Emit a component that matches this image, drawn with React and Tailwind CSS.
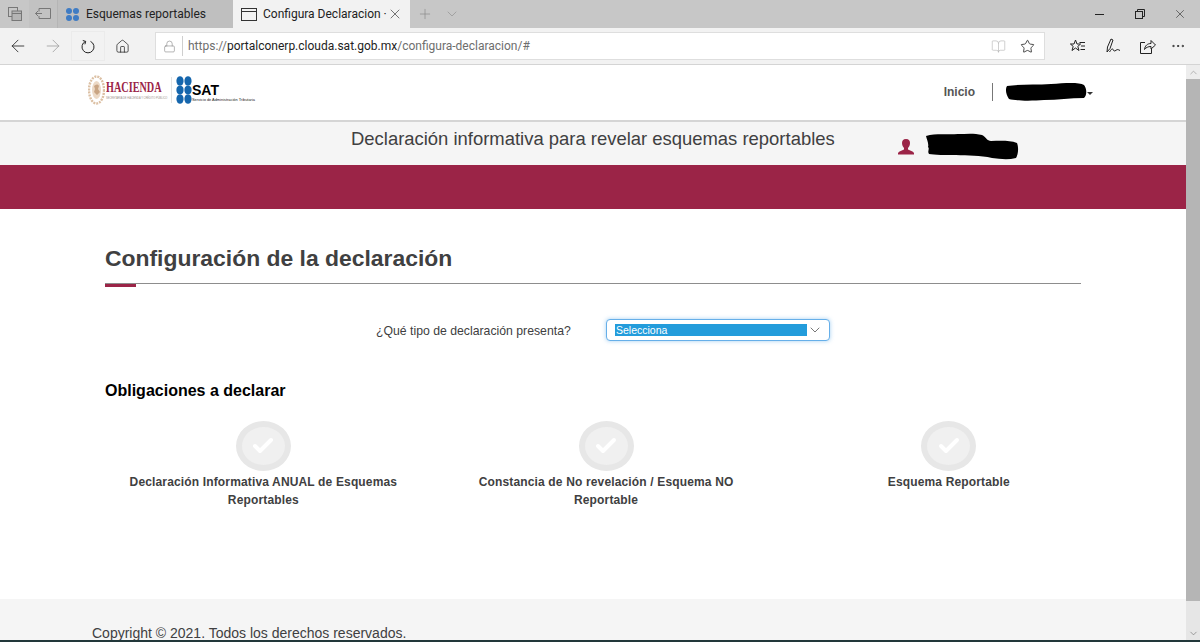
import React from "react";
import { ArrowLeft, ArrowRight, Home, Lock, Star, Plus, ChevronDown, ChevronUp, X, MoreHorizontal, BookOpen, Check } from "lucide-react";

function Emblem() {
  return (
    <svg width="17" height="30" viewBox="0 0 17 30" className="block shrink-0">
      <ellipse cx="8.5" cy="15" rx="7.5" ry="13.5" fill="none" stroke="#dcc0a4" strokeWidth="2.4" strokeDasharray="2 1" />
      <ellipse cx="8.5" cy="15" rx="4.5" ry="9" fill="#ecd9c6" />
      <path d="M6 11c2-2 4-2 5 0l-1 3 2 3-3 3-3-3 1-3z" fill="#c9a584" />
    </svg>
  );
}

function SatDots() {
  return (
    <svg width="16" height="28" viewBox="0 0 16 28" className="block shrink-0">
      <g fill="#1566ad">
        <ellipse cx="4" cy="5" rx="3.6" ry="4.8" />
        <ellipse cx="12" cy="5" rx="3.6" ry="4.8" />
        <ellipse cx="4" cy="14" rx="3.6" ry="4.2" />
        <ellipse cx="12" cy="14" rx="3.6" ry="4.2" />
        <ellipse cx="4" cy="23" rx="3.6" ry="4.8" />
        <ellipse cx="12" cy="23" rx="3.6" ry="4.8" />
      </g>
    </svg>
  );
}

function RestoreIcon() {
  return (
    <svg width="10" height="10" viewBox="0 0 10 10" fill="none" stroke="#222" strokeWidth="1">
      <rect x="0.5" y="2.500" width="7" height="7" />
      <path d="M2.500 2.500V.5h7v7H7.500" />
    </svg>
  );
}

function TabsIcon() {
  return (
    <svg width="14" height="14" viewBox="0 0 14 14" fill="none" stroke="#777" strokeWidth="1">
      <rect x="0.5" y="0.5" width="9" height="9" />
      <rect x="4" y="4" width="9.500" height="9.500" fill="#b5b5b5" />
      <path d="M4 6.500h9.500" />
    </svg>
  );
}

function AsideIcon() {
  return (
    <svg width="16" height="12" viewBox="0 0 16 12" fill="none" stroke="#777" strokeWidth="1">
      <path d="M4 3.500V.5h11.500v10H4V8" />
      <path d="M7 5.500H.5M3 3 .5 5.500 3 8" />
    </svg>
  );
}

function PageIcon() {
  return (
    <svg width="16" height="13" viewBox="0 0 16 13" fill="none" stroke="#333" strokeWidth="1" className="shrink-0">
      <rect x="0.5" y="0.5" width="15" height="12" />
      <path d="M0.500 3.500h15" />
    </svg>
  );
}

function FourDots() {
  return (
    <svg width="13" height="13" viewBox="0 0 13 13" fill="#3f7cc4" className="shrink-0">
      <circle cx="3" cy="3" r="3" />
      <circle cx="10" cy="3" r="3" />
      <circle cx="3" cy="10" r="3" />
      <circle cx="10" cy="10" r="3" />
    </svg>
  );
}

function ReloadIcon() {
  return (
    <svg width="14" height="15" viewBox="0 0 14 15" fill="none" stroke="#222" strokeWidth="1">
      <path d="M4.500 2.400A6 6 0 1 0 9.500 2.400" />
      <path d="M1.800 1.500 4.700 2.400 3.900 5.300" />
    </svg>
  );
}

function FavList() {
  return (
    <svg width="15" height="14" viewBox="0 0 15 14" fill="none" stroke="#222" strokeWidth="1">
      <path d="M5.500 1 7 5h3.600L7.800 7.400 9 11.500 5.500 9 2 11.500l1.200-4.100L.4 5H4z" />
      <path d="M9.500 3.500H15M11 7h4M10.500 10.500H15" />
    </svg>
  );
}

function PenIcon() {
  return (
    <svg width="15" height="16" viewBox="0 0 15 16" fill="none" stroke="#222" strokeWidth="1">
      <path d="M1 14 1.500 9 5 1l2 1-3 8.500z" />
      <path d="M3.500 14c2-3 3-4 3.500-2.500s1.500 2 3 .8 2-.8 4 .2" />
    </svg>
  );
}

function ShareIcon() {
  return (
    <svg width="16" height="15" viewBox="0 0 16 15" fill="none" stroke="#222" strokeWidth="1">
      <path d="M5 3.500H.5v11h11V10" />
      <path d="M4.500 10.500c.5-4 3-6 6.500-6V1.500l4.500 4.500L11 10V7.500c-3 0-5 1-6.500 3z" />
    </svg>
  );
}

function Scribble({ d, width, height }) {
  return (
    <svg width={width} height={height} viewBox={`0 0 ${width} ${height}`} className="block shrink-0">
      <path d={d} fill="#000" />
    </svg>
  );
}

function ToolButton({ children, className }) {
  return <div className={`flex h-[30px] items-center justify-center ${className}`}>{children}</div>;
}

function Obligation({ lines }) {
  return (
    <div className="flex flex-col items-center">
      <div className="flex h-[50px] w-[55px] items-center justify-center rounded-[50%] border-[6px] border-[#e7e7e7] bg-[#f0f0f0]">
        <Check size={24} strokeWidth={4} color="#ffffff" />
      </div>
      <p className="mt-[2px] w-[290px] text-center text-[12px] font-bold leading-[18px] tracking-[0.15px] text-[#404041]">{lines}</p>
    </div>
  );
}

export default function App() {
  return (
    <div className="flex h-[642px] w-[1200px] flex-col overflow-hidden bg-white font-['Liberation_Sans',Arial,sans-serif]">
      {/* Tab strip */}
      <div className="flex h-[28px] shrink-0 items-stretch bg-[#c7c7c7] font-['Roboto','Noto_Sans',sans-serif] text-[12px] text-[#222222]">
        <div className="flex w-[29px] items-center justify-center"><TabsIcon /></div>
        <div className="flex w-[28px] items-center justify-center bg-[#c2c2c2]"><AsideIcon /></div>
        <div className="flex w-[176px] items-center gap-[7px] border-l border-[#b5b5b5] bg-[#bfbfbf] pl-[8px]">
          <FourDots />
          <span>Esquemas reportables</span>
        </div>
        <div className="flex w-[177px] items-center bg-[#f2f2f2] pl-[8px] pr-[7px]">
          <PageIcon />
          <span className="ml-[6px] whitespace-nowrap">Configura Declaracion ·</span>
          <X size={16} strokeWidth={1} color="#333" className="ml-auto" />
        </div>
        <div className="flex items-center gap-[11px] pl-[7px]">
          <Plus size={16} strokeWidth={1} color="#8a8a8a" />
          <ChevronDown size={16} strokeWidth={1} color="#8f8f8f" />
        </div>
        <div className="ml-auto flex items-center">
          <div className="flex w-[41px] justify-center"><div className="h-px w-[9px] bg-[#222]" /></div>
          <div className="flex w-[40px] justify-center"><RestoreIcon /></div>
          <div className="flex w-[40px] justify-center"><X size={14} strokeWidth={1} color="#222" /></div>
        </div>
      </div>

      {/* Toolbar */}
      <div className="flex h-[37px] shrink-0 items-center border-b border-[#d4d4d4] bg-[#f2f2f2] pr-[8px]">
        <ToolButton className="w-[35px]"><ArrowLeft size={20} strokeWidth={1} color="#222" /></ToolButton>
        <ToolButton className="w-[36px]"><ArrowRight size={20} strokeWidth={1} color="#a0a0a0" /></ToolButton>
        <ToolButton className="w-[34px] border border-[#ebebeb]"><ReloadIcon /></ToolButton>
        <ToolButton className="w-[35px]"><Home size={15} strokeWidth={1.2} color="#222" /></ToolButton>
        <div className="ml-[15px] flex h-[28px] w-[890px] items-center border border-[#dedede] bg-white font-['Roboto','Noto_Sans',sans-serif] text-[12px]">
          <Lock size={13} strokeWidth={1} color="#777" className="ml-[7px]" />
          <div className="ml-[6px] h-[20px] w-px bg-[#cfcfcf]" />
          <span className="ml-[5px] text-[#6e6e6e]">https://</span>
          <span className="text-[#222]">portalconerp.clouda.sat.gob.mx</span>
          <span className="text-[#6e6e6e]">/configura-declaracion/#</span>
          <BookOpen size={15} strokeWidth={1} color="#b4b4b4" className="ml-auto" />
          <Star size={15} strokeWidth={1.3} color="#222" className="ml-[14px] mr-[9px]" />
        </div>
        <div className="ml-[25px]"><FavList /></div>
        <div className="ml-[21px]"><PenIcon /></div>
        <div className="ml-[19px]"><ShareIcon /></div>
        <MoreHorizontal size={16} strokeWidth={1.3} color="#222" className="ml-[14px]" />
      </div>

      <div className="flex min-h-0 flex-1">
        {/* Page */}
        <div className="flex min-w-0 flex-1 flex-col">
          {/* Header */}
          <div className="flex h-[57px] shrink-0 items-center border-b-2 border-[#d5d5d5] bg-white pb-[2px] pl-[88px] pr-[93px]">
            <div className="mb-[4px] flex items-center">
              <Emblem />
              <div className="ml-[1px] flex w-[62px] flex-col">
                <span className="origin-left scale-x-[0.68] whitespace-nowrap font-['Liberation_Serif',serif] text-[15px] font-bold leading-[15px] text-[#9b2447]">HACIENDA</span>
                <span className="mt-[2px] whitespace-nowrap text-[2.6px] leading-[3px] text-[#9a8f8a]">SECRETARÍA DE HACIENDA Y CRÉDITO PÚBLICO</span>
              </div>
              <div className="ml-[3px] h-[26px] w-px bg-[#e2e2e2]" />
              <div className="ml-[4px]"><SatDots /></div>
              <div className="mt-[7px] flex flex-col">
                <span className="text-[14px] font-bold leading-[13px] text-black">SAT</span>
                <span className="whitespace-nowrap text-[3.9px] leading-[6px] text-[#222]">Servicio de Administración Tributaria</span>
              </div>
            </div>
            <span className="ml-auto text-[12px] font-bold text-[#555555]">Inicio</span>
            <div className="ml-[17px] h-[18px] w-px bg-[#777]" />
            <div className="ml-[12px]">
              <Scribble width={82} height={18} d="M2 3c12-2 28-1 44-2 14-1 28-2 33 1 3 4 3 10 0 13-14 0-26 2-40 2-12 1-28 1-35-1-3-4-4-10-2-13z" />
            </div>
            <div className="mt-[3px] h-0 w-0 border-x-[3px] border-t-[3px] border-x-transparent border-t-[#333]" />
          </div>

          {/* Title bar */}
          <div className="flex h-[43px] shrink-0 bg-[#f5f5f5]">
            <span className="ml-[351px] mt-[5px] whitespace-nowrap text-[18.45px] leading-[24px] text-[#404041]">Declaración informativa para revelar esquemas reportables</span>
            <svg width="16" height="16" viewBox="0 0 16 16" className="ml-[63px] mt-[17px] shrink-0">
              <path d="M8 0c3 0 4 2 4 4s-1 4-2 5v1.500c2 1 5 1.500 6 3.500v1.500H0V14c1-2 4-2.500 6-3.500V9C5 8 4 6 4 4s1-4 4-4z" fill="#9b2447" />
            </svg>
            <div className="ml-[9px] mt-[11px]">
              <Scribble width={96} height={28} d="M3 3c10-3 22-1 32-2 8 0 16-1 24 1 4 2 5 6 9 6 8 0 18-1 26 2 2 5 1 12-1 15-8 2-16 1-24 0-12-3-24-2-36-3-10 0-22 0-27-1-2-3 1-5-1-7 1-3-1-7-2-11z" />
            </div>
          </div>

          {/* Band */}
          <div className="h-[44px] shrink-0 bg-[#9b2447]" />

          {/* Main */}
          <div className="min-h-0 flex-1 bg-white pl-[105px] pr-[105px]">
            <h1 className="mt-[34px] text-[22.9px] font-bold leading-[30px] text-[#404041]">Configuración de la declaración</h1>
            <div className="mt-[10px] h-px bg-[#8d8d8d]" />
            <div className="h-[3px] w-[31px] bg-[#9b2447]" />

            <div className="mt-[32px] flex h-[22px] items-center pl-[271px]">
              <span className="w-[230px] whitespace-nowrap pt-[2px] text-[12.25px] text-[#404041]">¿Qué tipo de declaración presenta?</span>
              <div className="flex h-[22px] w-[224px] items-center rounded-[4px] border border-[#66afe9] bg-white pl-[8px] shadow-[0_0_4px_rgba(102,175,233,0.6)]">
                <div className="mb-[1px] flex h-[12px] w-[192px] items-center bg-[#239cdb] pl-[1px] text-[10.5px] leading-[12px] text-white">Selecciona</div>
                <ChevronDown size={16} strokeWidth={1.2} color="#555" />
              </div>
            </div>

            <h2 className="mt-[40px] text-[16px] font-bold leading-[20px] text-black">Obligaciones a declarar</h2>

            <div className="-mx-[13px] mt-[20px] grid w-[1028.2px] grid-cols-3">
              <Obligation lines="Declaración Informativa ANUAL de Esquemas Reportables" />
              <Obligation lines="Constancia de No revelación / Esquema NO Reportable" />
              <Obligation lines="Esquema Reportable" />
            </div>
          </div>

          {/* Footer */}
          <div className="h-[41px] shrink-0 overflow-hidden bg-[#f5f5f5] pl-[92px] pt-[24px]">
            <p className="whitespace-nowrap text-[14px] leading-[20px] text-[#404041]">Copyright © 2021. Todos los derechos reservados.</p>
          </div>
        </div>

        {/* Scrollbar */}
        <div className="flex w-[14px] shrink-0 flex-col bg-[#e6e6e6]">
          <div className="flex h-[14px] shrink-0 items-center justify-center bg-[#ededed]"><ChevronUp size={11} strokeWidth={1.5} color="#999" /></div>
          <div className="h-[522px] shrink-0 bg-[#b5b5b5]" />
          <div className="mt-auto flex h-[14px] shrink-0 items-center justify-center"><ChevronDown size={11} strokeWidth={1.5} color="#777" /></div>
        </div>
      </div>

      {/* Taskbar edge */}
      <div className="h-[2px] shrink-0 bg-[#22383a]" />
    </div>
  );
}
